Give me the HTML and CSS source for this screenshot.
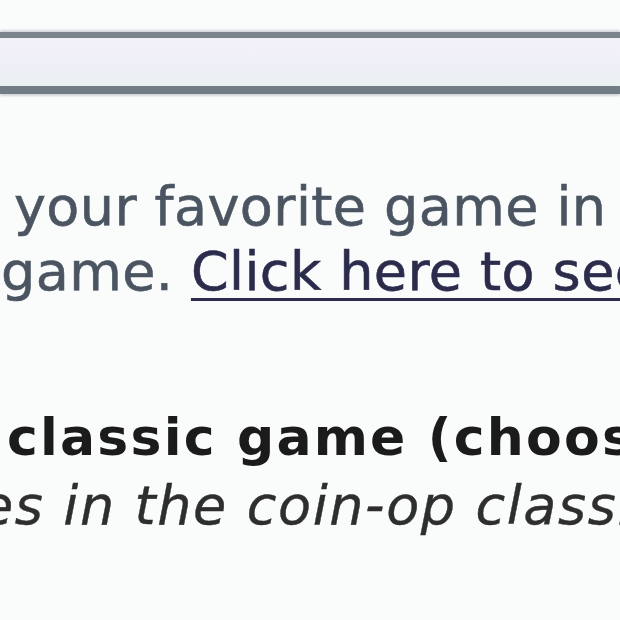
FILE: index.html
```html
<!DOCTYPE html>
<html lang="en">
<head>
    <meta charset="UTF-8">
    <meta name="viewport" content="width=device-width, initial-scale=1.0">
    <title>Classic Games</title>
    <link rel="stylesheet" href="styles.css">
</head>
<body>
    <div class="toolbar"></div>

    <p class="intro">
        <span class="line first">your favorite game in</span>
        <span class="line second">game. <a href="#">Click here to see</a></span>
    </p>

    <div class="game-entry">
        <h2 class="game-title">classic game (choose</h2>
        <p class="game-desc">es in the coin-op classic</p>
    </div>
</body>
</html>
```

FILE: styles.css
```css
/* General Styles */
body {
    margin: 0;
    background: #fafcfc;
    font-family: 'DejaVu Sans', Verdana, sans-serif;
    overflow: hidden;
}

/* Toolbar strip */
.toolbar {
    margin-top: 32px;
    height: 48px;
    border-top: 6px solid #7b838c;
    border-bottom: 8px solid #717c84;
    background: linear-gradient(#f2f1f9, #efeff7 60%, #e9f1f1);
    box-shadow: 0 -2px 2px #d4d8dc, 0 2px 2px #d0d6da;
}

/* Intro text */
.intro {
    margin: 80px 0 0;
    font-size: 54px;
    line-height: 65px;
    letter-spacing: 0.4px;
    color: #4b5561;
    -webkit-text-stroke: 0.6px #4b5561;
}

.line {
    display: block;
    white-space: nowrap;
}

.line.first {
    margin-left: 14px;
}

.line.second {
    margin-left: 1px;
}

.intro a {
    color: #2b2c4c;
    -webkit-text-stroke: 0.6px #2b2c4c;
    text-decoration: underline;
    text-decoration-thickness: 3px;
    text-underline-offset: 8px;
}

/* Game entry */
.game-entry {
    margin-top: 101px;
}

.game-title {
    margin: 0 0 0 7px;
    font-size: 52px;
    line-height: 64px;
    letter-spacing: 2.2px;
    font-weight: bold;
    color: #1b1b1b;
    white-space: nowrap;
}

.game-desc {
    margin: 0 0 0 -20px;
    font-size: 54px;
    line-height: 74px;
    letter-spacing: 1.6px;
    font-style: italic;
    color: #2e2e2e;
    -webkit-text-stroke: 0.4px #2e2e2e;
    white-space: nowrap;
}
```
